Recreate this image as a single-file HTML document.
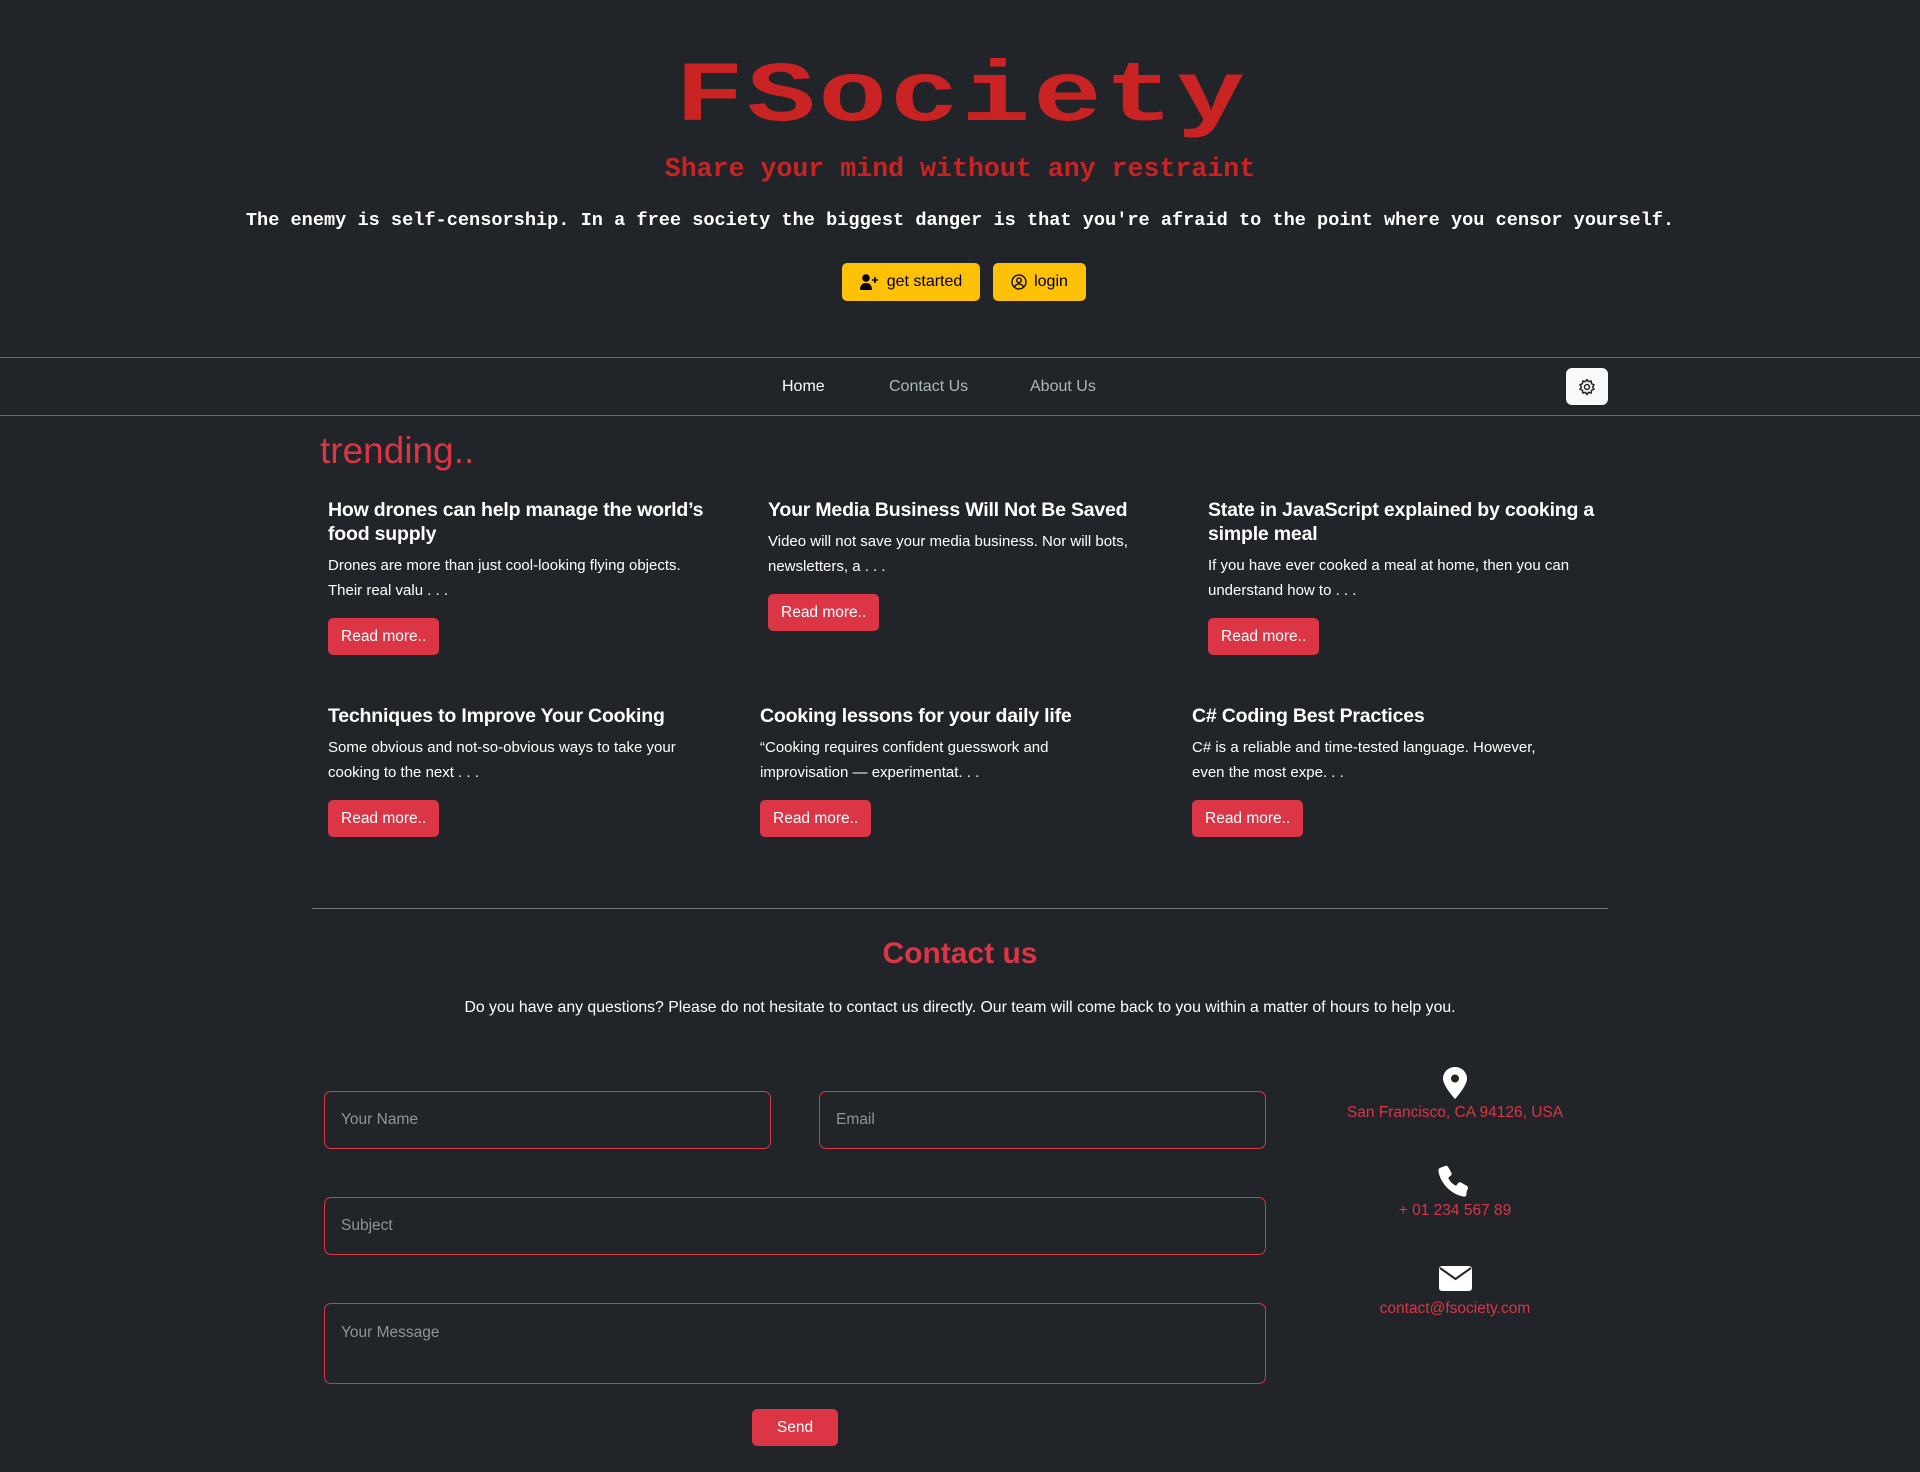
<!DOCTYPE html>
<html><head><meta charset="utf-8">
<style>
*{box-sizing:border-box;margin:0;padding:0}
html,body{width:1920px;height:1472px;background:#212529;overflow:hidden}
body{position:relative;font-family:"Liberation Sans",sans-serif;color:#fff}
.a{position:absolute;white-space:nowrap}
.mono{font-family:"Liberation Mono",monospace}
.title{left:0;width:1920px;text-align:center;top:43px;line-height:110px}
.title span{display:inline-block;font-size:85px;font-weight:bold;color:#c92323;letter-spacing:2px;padding-left:2px;transform:scaleX(1.35);transform-origin:center}
.sub{left:0;width:1920px;text-align:center;top:151px;font-size:26.6px;font-weight:bold;color:#c92323;line-height:36px}
.quote{left:0;width:1920px;text-align:center;top:209px;font-size:18.6px;font-weight:bold;line-height:24px}
.ybtn{position:absolute;top:263px;height:38px;background:#ffc107;border-radius:5px;color:#000;font-size:16px;display:flex;align-items:center;justify-content:center;gap:7px}
.line{position:absolute;left:0;width:1920px;height:1px;background:#dc3545}
.nav{top:378px;font-size:16px;color:#adb5bd}
.gear{position:absolute;left:1566px;top:368px;width:42px;height:37px;background:#f8f9fa;border-radius:6px;display:flex;align-items:center;justify-content:center}
.trend{left:320px;top:426px;font-size:37px;font-weight:normal;color:#dc3545;line-height:50px}
.card{position:absolute;width:375px}
.card h5{font-size:19.5px;font-weight:bold;line-height:24px;margin-bottom:8px;letter-spacing:-0.2px;width:400px}
.card p{font-size:15px;line-height:24.5px;margin-bottom:15px}
.rbtn{display:inline-block;background:#dc3545;color:#fff;border-radius:5px;height:37px;line-height:37px;padding:0 13px;font-size:15.5px}
.inp{position:absolute;border:1px solid #dc3545;border-radius:7px;color:#8d959c;font-size:15.5px;padding-left:16px;display:flex;align-items:center}
.info{left:1300px;width:310px;text-align:center;color:#dc3545;font-size:15.5px}
</style></head><body>
<div class="a mono title"><span>FSociety</span></div>
<div class="a mono sub">Share your mind without any restraint</div>
<div class="a mono quote">The enemy is self-censorship. In a free society the biggest danger is that you're afraid to the point where you censor yourself.</div>
<div class="ybtn" style="left:842px;width:138px">
<svg width="20" height="16" viewBox="0 0 20 16"><circle cx="6" cy="4" r="3.8" fill="#000"/><path d="M0 16c0-5 2.5-7 6-7s6 2 6 7z" fill="#000"/><path d="M15 3v6M12 6h6" stroke="#000" stroke-width="1.6"/></svg>get started</div>
<div class="ybtn" style="left:993px;width:93px">
<svg width="16" height="16" viewBox="0 0 16 16"><circle cx="8" cy="8" r="7" fill="none" stroke="#000" stroke-width="1.3"/><circle cx="8" cy="6.3" r="2.3" fill="none" stroke="#000" stroke-width="1.3"/><path d="M3.5 13c1-2.2 2.5-3 4.5-3s3.5.8 4.5 3" fill="none" stroke="#000" stroke-width="1.3"/></svg>login</div>
<div class="line" style="top:357px"></div>
<div class="line" style="top:415px"></div>
<div class="a nav" style="left:782px;color:#fff">Home</div>
<div class="a nav" style="left:889px">Contact Us</div>
<div class="a nav" style="left:1030px">About Us</div>
<div class="gear"><svg width="18" height="18" viewBox="0 0 18 18"><path d="M9 1.5l1.6 2.2 2.6-.7.3 2.7 2.5 1.1-1.4 2.2 1.4 2.2-2.5 1.1-.3 2.7-2.6-.7L9 16.5l-1.6-2.2-2.6.7-.3-2.7-2.5-1.1L3.4 9 2 6.8l2.5-1.1.3-2.7 2.6.7z" fill="none" stroke="#212529" stroke-width="1.5" stroke-linejoin="round"/><circle cx="9" cy="9" r="2.5" fill="none" stroke="#212529" stroke-width="1.5"/></svg></div>
<div class="a trend">trending..</div>

<div class="card" style="left:328px;top:498px"><h5>How drones can help manage the world’s<br>food supply</h5><p>Drones are more than just cool-looking flying objects. Their real valu . . .</p><span class="rbtn">Read more..</span></div>
<div class="card" style="left:768px;top:498px"><h5>Your Media Business Will Not Be Saved</h5><p>Video will not save your media business. Nor will bots, newsletters, a . . .</p><span class="rbtn">Read more..</span></div>
<div class="card" style="left:1208px;top:498px"><h5>State in JavaScript explained by cooking a<br>simple meal</h5><p>If you have ever cooked a meal at home, then you can understand how to . . .</p><span class="rbtn">Read more..</span></div>
<div class="card" style="left:328px;top:704px"><h5>Techniques to Improve Your Cooking</h5><p>Some obvious and not-so-obvious ways to take your cooking to the next . . .</p><span class="rbtn">Read more..</span></div>
<div class="card" style="left:760px;top:704px"><h5>Cooking lessons for your daily life</h5><p>“Cooking requires confident guesswork and improvisation — experimentat. . .</p><span class="rbtn">Read more..</span></div>
<div class="card" style="left:1192px;top:704px"><h5>C# Coding Best Practices</h5><p>C# is a reliable and time-tested language. However, even the most expe. . .</p><span class="rbtn">Read more..</span></div>

<div style="position:absolute;left:312px;top:908px;width:1296px;height:1px;background:#6c757d"></div>
<div class="a" style="left:0;width:1920px;text-align:center;top:934px;font-size:30px;font-weight:bold;color:#dc3545;line-height:40px">Contact us</div>
<div class="a" style="left:0;width:1920px;text-align:center;top:998px;font-size:15.8px;line-height:20px">Do you have any questions? Please do not hesitate to contact us directly. Our team will come back to you within a matter of hours to help you.</div>

<div class="inp" style="left:324px;top:1091px;width:447px;height:58px">Your Name</div>
<div class="inp" style="left:819px;top:1091px;width:447px;height:58px">Email</div>
<div class="inp" style="left:324px;top:1197px;width:942px;height:58px">Subject</div>
<div class="inp" style="left:324px;top:1303px;width:942px;height:81px;align-items:flex-start;padding-top:20px">Your Message</div>
<div class="rbtn" style="position:absolute;left:752px;top:1409px;width:86px;text-align:center;padding:0">Send</div>

<svg style="position:absolute;left:1443px;top:1067px" width="24" height="32" viewBox="0 0 24 32"><path d="M12 0C5.4 0 0 5.2 0 11.6 0 19 12 32 12 32s12-13 12-20.4C24 5.2 18.6 0 12 0z" fill="#fff"/><circle cx="12" cy="11.5" r="4" fill="#212529"/></svg>
<div class="a info" style="top:1104px">San Francisco, CA 94126, USA</div>
<svg style="position:absolute;left:1438px;top:1165px" width="32" height="32" viewBox="0 0 32 32"><path d="M7 1c1.5-.6 2.6 0 3.3 1.3l3 5.300c.6 1.2.3 2.4-.7 3.2l-2.4 1.9c1.5 3.6 4.3 6.4 7.9 8l1.9-2.4c.8-1 2-1.3 3.2-.7l5.3 3c1.3.7 1.9 1.8 1.3 3.3l-1.3 3.2C28.8 31 27.5 31.8 26 31.6 13.8 30 2 18.2.4 6c-.2-1.5.6-2.8 2-3.3z" fill="#fff"/></svg>
<div class="a info" style="top:1202px">+ 01 234 567 89</div>
<svg style="position:absolute;left:1439px;top:1266px" width="33" height="25" viewBox="0 0 33 25"><rect x="0" y="0" width="33" height="25" rx="3" fill="#fff"/><path d="M1 2l15.5 11L32 2" fill="none" stroke="#212529" stroke-width="2"/></svg>
<div class="a info" style="top:1300px">contact@fsociety.com</div>
</body></html>
